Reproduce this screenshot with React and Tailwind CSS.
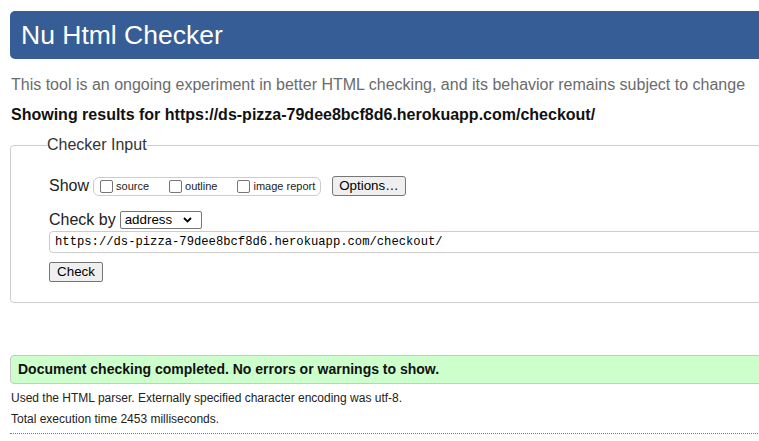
import React from 'react';

function Checkbox({ label }) {
  return (
    <label className="flex items-center">
      <span className="w-[13px] h-[13px] border border-[#767676] rounded-[2px] bg-white mr-[3px]"></span>
      <span className="text-[11px] leading-[13px]">{label}</span>
    </label>
  );
}

export default function App() {
  return (
    <div className="w-[759px] h-[441px] overflow-hidden bg-white font-['Liberation_Sans',Arial,sans-serif] text-[#222]">
      <div className="w-[1100px] pl-[10px] flex flex-col">
        {/* cabecera */}
        <div className="mt-[11px] h-[48px] bg-[#365d95] rounded-l-[5px] flex items-center pl-[11px]">
          <h1 className="text-white text-[26.5px] leading-[30px]">Nu Html Checker</h1>
        </div>

        <p className="mt-[17px] pl-[1px] text-[16px] leading-[18px] text-[#6b6b6b]">
          This tool is an ongoing experiment in better HTML checking, and its behavior remains subject to change
        </p>
        <p className="mt-[12px] pl-[1px] text-[16px] leading-[18px] font-bold text-[#111]">
          Showing results for https://ds-pizza-79dee8bcf8d6.herokuapp.com/checkout/
        </p>

        {/* Checker Input */}
        <fieldset className="mt-[12px] border border-[#cccccc] rounded-[4px] pl-[36px] pb-[19px]">
          <legend className="text-[16px] leading-[18px] text-[#333]">Checker Input</legend>
          <div className="flex flex-col pl-[2px]">
            <div className="mt-[22px] flex items-center h-[20px]">
              <span className="text-[16px] leading-[18px]">Show</span>
              <div className="ml-[4px] h-[19px] flex items-center gap-[20px] border border-[#cccccc] rounded-[6px] pl-[6px] pr-[5px]">
                <Checkbox label="source" />
                <Checkbox label="outline" />
                <Checkbox label="image report" />
              </div>
              <button className="ml-[11px] h-[20px] px-[6px] border border-[#767676] rounded-[3px] bg-[#efefef] text-[13.33px] leading-[16px] text-black">
                Options…
              </button>
            </div>

            <div className="mt-[14px] flex items-center h-[20px]">
              <span className="text-[16px] leading-[18px]">Check by</span>
              <span className="ml-[4px] w-[82px] h-[18px] border border-[#767676] rounded-[2px] flex items-center justify-between pl-[4px] pr-[9px] text-[13.33px] leading-[16px] text-black">
                address
                <svg width="9" height="6" viewBox="0 0 9 6" fill="none">
                  <path d="M1 1l3.5 3.5L8 1" stroke="#000" strokeWidth="1.8" />
                </svg>
              </span>
            </div>

            <div className="mt-[1px] h-[22px] border border-[#cccccc] rounded-l-[4px] flex items-center pl-[5px] font-['Liberation_Mono',monospace] text-[12.2px] text-black">
              https://ds-pizza-79dee8bcf8d6.herokuapp.com/checkout/
            </div>

            <div className="mt-[6px]">
              <button className="h-[20px] w-[54px] border border-[#767676] rounded-[2px] bg-[#efefef] text-[13.33px] leading-[16px] text-black">
                Check
              </button>
            </div>
          </div>
        </fieldset>

        {/* resultado */}
        <div className="mt-[52px] h-[29px] bg-[#ccffcc] border border-[#c8c8c8] rounded-l-[4px] flex items-center pl-[7px]">
          <p className="text-[14px] font-bold text-[#111]">Document checking completed. No errors or warnings to show.</p>
        </div>
        <p className="mt-[7px] pl-[1px] text-[12px] leading-[14px]">
          Used the HTML parser. Externally specified character encoding was utf-8.
        </p>
        <p className="mt-[7px] pl-[1px] text-[12px] leading-[14px]">Total execution time 2453 milliseconds.</p>
        <div className="mt-[7px] border-t border-dotted border-[#777]"></div>
      </div>
    </div>
  );
}
